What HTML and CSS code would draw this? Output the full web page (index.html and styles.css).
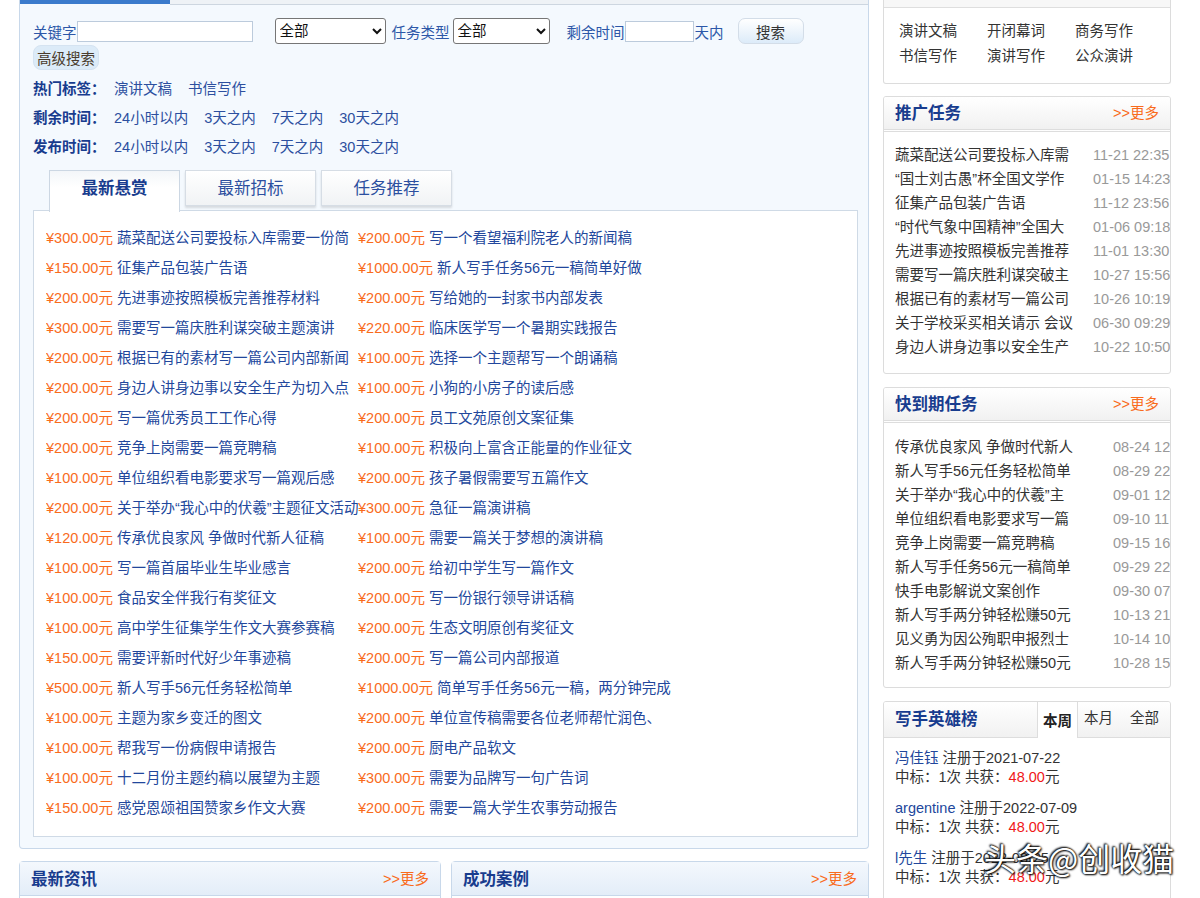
FILE: index.html
```html
<!DOCTYPE html>
<html lang="zh">
<head>
<meta charset="utf-8">
<title>任务大厅</title>
<link rel="stylesheet" href="styles.css">
</head>
<body>
<div class="page">
  <div class="left">
    <div class="main-panel">
      <div class="main-top"><div class="main-top-tab"></div><div class="main-top-rest"></div></div>
      <div class="panel-body">
        <div class="search-row">
          <span class="lbl">关键字</span><input class="inp inp-kw" type="text">
          <select class="sel sel-1"><option>全部</option></select>
          <span class="lbl lbl-type">任务类型</span><select class="sel sel-2"><option>全部</option></select>
          <span class="lbl lbl-time">剩余时间</span><input class="inp inp-days" type="text"><span class="lbl lbl-days">天内</span>
          <button class="btn-search">搜索</button>
        </div>
        <button class="btn-adv">高级搜索</button>
        <div class="filters">
          <div class="filter-row"><span class="flabel">热门标签：</span><a class="flink">演讲文稿</a><a class="flink">书信写作</a></div>
          <div class="filter-row"><span class="flabel">剩余时间：</span><a class="flink">24小时以内</a><a class="flink">3天之内</a><a class="flink">7天之内</a><a class="flink">30天之内</a></div>
          <div class="filter-row"><span class="flabel">发布时间：</span><a class="flink">24小时以内</a><a class="flink">3天之内</a><a class="flink">7天之内</a><a class="flink">30天之内</a></div>
        </div>
        <div class="tabs">
          <div class="tab active">最新悬赏</div>
          <div class="tab">最新招标</div>
          <div class="tab">任务推荐</div>
        </div>
        <div class="task-box">
          <ul class="task-list">
            <li><span class="price">¥300.00元</span> <a>蔬菜配送公司要投标入库需要一份简</a></li>
            <li><span class="price">¥200.00元</span> <a>写一个看望福利院老人的新闻稿</a></li>
            <li><span class="price">¥150.00元</span> <a>征集产品包装广告语</a></li>
            <li><span class="price">¥1000.00元</span> <a>新人写手任务56元一稿简单好做</a></li>
            <li><span class="price">¥200.00元</span> <a>先进事迹按照模板完善推荐材料</a></li>
            <li><span class="price">¥200.00元</span> <a>写给她的一封家书内部发表</a></li>
            <li><span class="price">¥300.00元</span> <a>需要写一篇庆胜利谋突破主题演讲</a></li>
            <li><span class="price">¥220.00元</span> <a>临床医学写一个暑期实践报告</a></li>
            <li><span class="price">¥200.00元</span> <a>根据已有的素材写一篇公司内部新闻</a></li>
            <li><span class="price">¥100.00元</span> <a>选择一个主题帮写一个朗诵稿</a></li>
            <li><span class="price">¥200.00元</span> <a>身边人讲身边事以安全生产为切入点</a></li>
            <li><span class="price">¥100.00元</span> <a>小狗的小房子的读后感</a></li>
            <li><span class="price">¥200.00元</span> <a>写一篇优秀员工工作心得</a></li>
            <li><span class="price">¥200.00元</span> <a>员工文苑原创文案征集</a></li>
            <li><span class="price">¥200.00元</span> <a>竞争上岗需要一篇竞聘稿</a></li>
            <li><span class="price">¥100.00元</span> <a>积极向上富含正能量的作业征文</a></li>
            <li><span class="price">¥100.00元</span> <a>单位组织看电影要求写一篇观后感</a></li>
            <li><span class="price">¥200.00元</span> <a>孩子暑假需要写五篇作文</a></li>
            <li><span class="price">¥200.00元</span> <a>关于举办“我心中的伏羲”主题征文活动</a></li>
            <li><span class="price">¥300.00元</span> <a>急征一篇演讲稿</a></li>
            <li><span class="price">¥120.00元</span> <a>传承优良家风 争做时代新人征稿</a></li>
            <li><span class="price">¥100.00元</span> <a>需要一篇关于梦想的演讲稿</a></li>
            <li><span class="price">¥100.00元</span> <a>写一篇首届毕业生毕业感言</a></li>
            <li><span class="price">¥200.00元</span> <a>给初中学生写一篇作文</a></li>
            <li><span class="price">¥100.00元</span> <a>食品安全伴我行有奖征文</a></li>
            <li><span class="price">¥200.00元</span> <a>写一份银行领导讲话稿</a></li>
            <li><span class="price">¥100.00元</span> <a>高中学生征集学生作文大赛参赛稿</a></li>
            <li><span class="price">¥200.00元</span> <a>生态文明原创有奖征文</a></li>
            <li><span class="price">¥150.00元</span> <a>需要评新时代好少年事迹稿</a></li>
            <li><span class="price">¥200.00元</span> <a>写一篇公司内部报道</a></li>
            <li><span class="price">¥500.00元</span> <a>新人写手56元任务轻松简单</a></li>
            <li><span class="price">¥1000.00元</span> <a>简单写手任务56元一稿，两分钟完成</a></li>
            <li><span class="price">¥100.00元</span> <a>主题为家乡变迁的图文</a></li>
            <li><span class="price">¥200.00元</span> <a>单位宣传稿需要各位老师帮忙润色、</a></li>
            <li><span class="price">¥100.00元</span> <a>帮我写一份病假申请报告</a></li>
            <li><span class="price">¥200.00元</span> <a>厨电产品软文</a></li>
            <li><span class="price">¥100.00元</span> <a>十二月份主题约稿以展望为主题</a></li>
            <li><span class="price">¥300.00元</span> <a>需要为品牌写一句广告词</a></li>
            <li><span class="price">¥150.00元</span> <a>感党恩颂祖国赞家乡作文大赛</a></li>
            <li><span class="price">¥200.00元</span> <a>需要一篇大学生农事劳动报告</a></li>
          </ul>
        </div>
      </div>
    </div>
    <div class="bottom-row">
      <div class="bbox bbox-news"><div class="bbox-head"><span class="bbox-title">最新资讯</span><a class="more">&gt;&gt;更多</a></div></div>
      <div class="bbox bbox-case"><div class="bbox-head"><span class="bbox-title">成功案例</span><a class="more">&gt;&gt;更多</a></div></div>
    </div>
  </div>

  <div class="right">
    <div class="rbox rbox-tags">
      <div class="rbox-head-stub"></div>
      <div class="tag-grid">
        <a>演讲文稿</a><a>开闭幕词</a><a>商务写作</a>
        <a>书信写作</a><a>演讲写作</a><a>公众演讲</a>
      </div>
    </div>

    <div class="rbox">
      <div class="rbox-head"><span class="rbox-title">推广任务</span><a class="more">&gt;&gt;更多</a></div>
      <ul class="rlist rlist-promo">
        <li><span class="rt">蔬菜配送公司要投标入库需</span><span class="rd">11-21 22:35</span></li>
        <li><span class="rt">“国士刘古愚”杯全国文学作</span><span class="rd">01-15 14:23</span></li>
        <li><span class="rt">征集产品包装广告语</span><span class="rd">11-12 23:56</span></li>
        <li><span class="rt">“时代气象中国精神”全国大</span><span class="rd">01-06 09:18</span></li>
        <li><span class="rt">先进事迹按照模板完善推荐</span><span class="rd">11-01 13:30</span></li>
        <li><span class="rt">需要写一篇庆胜利谋突破主</span><span class="rd">10-27 15:56</span></li>
        <li><span class="rt">根据已有的素材写一篇公司</span><span class="rd">10-26 10:19</span></li>
        <li><span class="rt">关于学校采买相关请示 会议</span><span class="rd">06-30 09:29</span></li>
        <li><span class="rt">身边人讲身边事以安全生产</span><span class="rd">10-22 10:50</span></li>
      </ul>
    </div>

    <div class="rbox">
      <div class="rbox-head"><span class="rbox-title">快到期任务</span><a class="more">&gt;&gt;更多</a></div>
      <ul class="rlist rlist-due">
        <li><span class="rt">传承优良家风 争做时代新人</span><span class="rd">08-24 12</span></li>
        <li><span class="rt">新人写手56元任务轻松简单</span><span class="rd">08-29 22</span></li>
        <li><span class="rt">关于举办“我心中的伏羲”主</span><span class="rd">09-01 12</span></li>
        <li><span class="rt">单位组织看电影要求写一篇</span><span class="rd">09-10 11</span></li>
        <li><span class="rt">竞争上岗需要一篇竞聘稿</span><span class="rd">09-15 16</span></li>
        <li><span class="rt">新人写手任务56元一稿简单</span><span class="rd">09-29 22</span></li>
        <li><span class="rt">快手电影解说文案创作</span><span class="rd">09-30 07</span></li>
        <li><span class="rt">新人写手两分钟轻松赚50元</span><span class="rd">10-13 21</span></li>
        <li><span class="rt">见义勇为因公殉职申报烈士</span><span class="rd">10-14 10</span></li>
        <li><span class="rt">新人写手两分钟轻松赚50元</span><span class="rd">10-28 15</span></li>
      </ul>
    </div>

    <div class="rbox rbox-hero">
      <div class="rbox-head hero-head">
        <span class="rbox-title">写手英雄榜</span>
        <div class="hero-tabs"><span class="htab active">本周</span><span class="htab">本月</span><span class="htab">全部</span></div>
      </div>
      <div class="hero-list">
        <div class="hero"><div><a class="hname">冯佳钰</a> 注册于2021-07-22</div><div>中标：1次 共获：<span class="money">48.00</span>元</div></div>
        <div class="hero"><div><a class="hname">argentine</a> 注册于2022-07-09</div><div>中标：1次 共获：<span class="money">48.00</span>元</div></div>
        <div class="hero"><div><a class="hname">l先生</a> 注册于2022-08-25</div><div>中标：1次 共获：<span class="money">48.00</span>元</div></div>
      </div>
    </div>
  </div>
</div>
<div class="watermark">头条@创收猫</div>
</body>
</html>
```
FILE: styles.css
```css
* { box-sizing: border-box; }
html, body { margin: 0; padding: 0; }
body {
  font-family: "Liberation Sans", "Noto Sans CJK SC", sans-serif;
  font-size: 14.5px;
  color: #333;
  background: #fff;
  overflow: hidden;
  height: 898px;
  position: relative;
}
a { text-decoration: none; cursor: pointer; }
ul { list-style: none; margin: 0; padding: 0; }

.page {
  display: flex;
  align-items: flex-start;
  padding-left: 19px;
  gap: 14px;
}
.left { width: 850px; flex: none; }
.right { width: 288px; flex: none; }

/* main panel */
.main-panel {
  background: #f4f9fe;
  border: 1px solid #c8d8ea;
  border-top: none;
  border-radius: 0 0 4px 4px;
  padding-bottom: 11px;
}
.main-top { display: flex; height: 5px; }
.main-top-tab { width: 150px; height: 4px; background: #3b7bcc; }
.main-top-rest { flex: 1; border-bottom: 1px solid #cdd6e0; background: #eef2f6; height: 5px; }

.panel-body { padding: 13px 10px 0 13px; }

.search-row { display: flex; align-items: center; height: 26px; }
.lbl { color: #2c57a8; white-space: nowrap; }
.inp {
  height: 21px;
  border: 1px solid #bccbdc;
  background: #fff;
  margin: 0;
  padding: 0 2px;
}
.inp-kw { width: 176px; }
.inp-days { width: 69px; }
.sel {
  height: 26px;
  font-family: "Liberation Sans", "Noto Sans CJK SC", sans-serif;
  font-size: 14.5px;
  border: 1px solid #767676;
  border-radius: 3px;
  background: #fff;
  color: #111;
  margin: 0;
}
.sel-1 { width: 111px; margin-left: 22px; }
.lbl-type { margin-left: 6px; margin-right: 3px; }
.sel-2 { width: 97px; }
.lbl-time { margin-left: 17px; }
.lbl-days { margin-left: 1px; }
.btn-search {
  margin-left: 14px;
  width: 66px;
  height: 26px;
  border: 1px solid #d3dde8;
  border-radius: 7px;
  background: linear-gradient(#ffffff, #dcebf9);
  font-family: "Liberation Sans", "Noto Sans CJK SC", sans-serif;
  font-size: 14.5px;
  color: #333;
  padding: 0;
}
.btn-adv {
  display: block;
  margin-top: 1px;
  width: 66px;
  height: 25px;
  border: 1px solid #d5e3f1;
  border-radius: 8px;
  background: #dcebf8;
  font-family: "Liberation Sans", "Noto Sans CJK SC", sans-serif;
  font-size: 14.5px;
  color: #4a3b2c;
  padding: 0;
}
.filters { margin-top: 5px; }
.filter-row {
  display: flex;
  height: 29px;
  line-height: 29px;
}
.flabel { width: 81px; font-weight: bold; color: #183c8e; }
.flink { color: #2c4f9f; margin-right: 16px; }

/* tabs */
.tabs {
  display: flex;
  gap: 5px;
  margin-left: 16px;
  margin-top: 8px;
  align-items: flex-start;
  position: relative;
  z-index: 1;
}
.tab {
  width: 131px;
  height: 36px;
  line-height: 34px;
  text-align: center;
  font-size: 16.5px;
  color: #2c4f9f;
  border: 1px solid #d6dde5;
  background: linear-gradient(#ffffff, #f1f3f5);
  box-shadow: 0 2px 2px rgba(0,0,0,0.12);
}
.tab.active {
  height: 42px;
  font-weight: bold;
  color: #183c8e;
  border-color: #ccd7e3;
  border-bottom: none;
  box-shadow: none;
  background: linear-gradient(#f3f6f9, #ffffff 40%);
  margin-bottom: -1px;
}
.task-box {
  background: #fff;
  border: 1px solid #cfdae6;
  margin-top: -1px;
  padding: 12px 0 13px 12px;
}
.task-list {
  display: grid;
  grid-template-columns: 312px 400px;
}
.task-list li {
  height: 30px;
  line-height: 30px;
  white-space: nowrap;
  overflow: hidden;
}
.price { color: #f96b1c; }
.task-list a { color: #22479c; }

/* bottom boxes */
.bottom-row { display: flex; gap: 10px; margin-top: 12px; }
.bbox {
  height: 60px;
  border: 1px solid #c8d8ea;
  border-radius: 4px 4px 0 0;
  background: #fff;
}
.bbox-news { width: 422px; }
.bbox-case { width: 418px; }
.bbox-head {
  height: 34px;
  display: flex;
  align-items: center;
  justify-content: space-between;
  padding: 0 11px 2px;
  background: linear-gradient(#f4f8fd, #e3edf8);
  border-bottom: 1px solid #c8d8ea;
}
.bbox-title { font-size: 16.5px; font-weight: bold; color: #183c8e; }
.more { color: #f96b1c; font-size: 14.5px; }

/* right column */
.rbox {
  border: 1px solid #dcdcdc;
  border-radius: 3px;
  background: #fff;
  overflow: hidden;
  margin-bottom: 13px;
}
.rbox-tags { border-top: none; border-radius: 0 0 3px 3px; margin-bottom: 12px; }
.rbox-head-stub {
  height: 8px;
  background: #f7f7f7;
  border-bottom: 1px solid #dedede;
}
.tag-grid {
  display: grid;
  grid-template-columns: 88px 88px 88px;
  padding: 11px 0 14px 15px;
}
.tag-grid a { color: #333; line-height: 25px; }

.rbox-head {
  height: 35px;
  display: flex;
  align-items: center;
  justify-content: space-between;
  padding: 0 11px 3px 11px;
  background: linear-gradient(#ffffff, #f1f1f1);
  border-bottom: 3px double #dddddd;
}
.rbox-title { font-size: 16.5px; font-weight: bold; color: #183c8e; }

.rlist { padding: 11px 0 14px 11px; }
.rlist li {
  display: flex;
  height: 24px;
  line-height: 24px;
  white-space: nowrap;
}
.rt { color: #333; overflow: hidden; flex: none; }
.rd { color: #999; flex: none; }
.rlist-promo .rt { width: 198px; }
.rlist-due { padding-top: 12px; padding-bottom: 12px; }
.rlist-due .rt { width: 218px; }

.hero-head { padding-right: 0; padding-bottom: 0; height: 36px; align-items: stretch; border-bottom: 1px solid #ddd; }
.hero-head .rbox-title { align-self: center; margin-bottom: 4px; }
.hero-tabs { display: flex; align-items: stretch; }
.htab {
  padding: 0 6px;
  line-height: 32px;
  color: #333;
  margin-right: 5px;
}
.htab.active {
  background: #fff;
  border-left: 1px solid #ddd;
  border-right: 1px solid #ddd;
  font-weight: bold;
  color: #222;
  margin-bottom: -1px;
  padding: 0 5px;
  line-height: 38px;
  margin-right: 0;
}
.hero-list { padding: 11px 0 40px 11px; }
.hero { line-height: 19px; margin-bottom: 12px; color: #333; }
.hname { color: #22479c; }
.money { color: #f01818; }

.watermark {
  position: absolute;
  left: 984px;
  top: 834px;
  font-family: "Noto Sans CJK SC", sans-serif;
  font-size: 32px;
  color: #fff;
  text-shadow: 0 0 2px #000, 1px 1px 2px #000, -1px -1px 2px #000;
  white-space: nowrap;
}
```
